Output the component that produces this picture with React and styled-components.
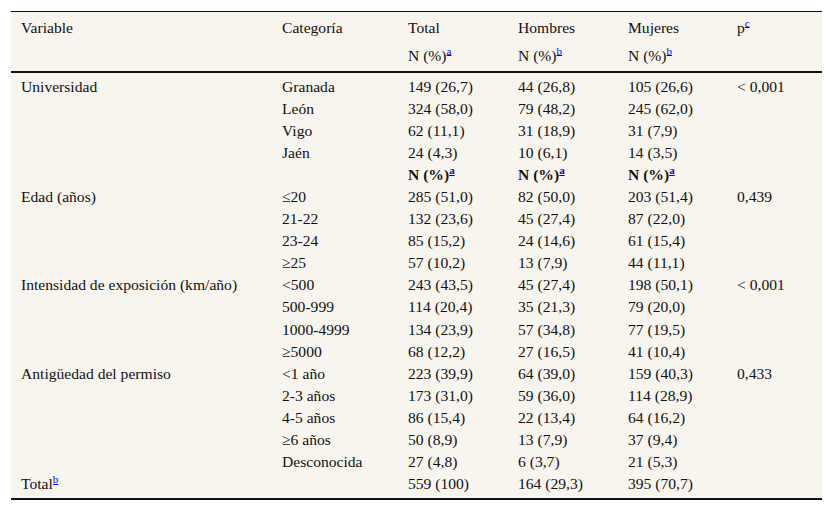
import React from "react";
import styled, { createGlobalStyle } from "styled-components";

const GlobalStyle = createGlobalStyle`
  body {
    margin: 0;
    background: #ffffff;
    font-family: "Liberation Serif", "Times New Roman", serif;
  }
`;

const Page = styled.div`
  padding: 11px 0 0 11px;
`;

const Table = styled.table`
  width: 811px;
  table-layout: fixed;
  border-collapse: collapse;
  background: #f8f5ef;
  border-top: 1px solid #111;
  border-bottom: 2px solid #111;
  font-family: "Liberation Serif", "Times New Roman", serif;
  font-size: 15.6px;
  color: #111;
`;

const Th = styled.th`
  text-align: left;
  font-weight: normal;
  vertical-align: top;
  padding: ${(p) => (p.$second ? "5.5px 10px 7.5px" : "6.5px 10px 5.5px")};
  height: 17px;
  line-height: 17px;
  width: ${(p) => p.$w || "auto"};
  white-space: nowrap;
`;

const HeadRow = styled.tr`
  &:last-child th {
    border-bottom: 2px solid #111;
  }
`;

const Td = styled.td`
  text-align: left;
  vertical-align: top;
  padding: 2.5px 10px 2.6px;
  line-height: 17px;
  font-weight: ${(p) => (p.$bold ? "bold" : "normal")};
  white-space: nowrap;
  tbody tr:first-child & {
    padding-top: 4.5px;
  }
  tbody tr:last-child & {
    padding-bottom: 5.5px;
  }
`;

const Sup = styled.a`
  color: #0000ee;
  text-decoration: underline;
  font-size: 11px;
  vertical-align: super;
  line-height: 0;
`;

const rows = [
  ["Universidad", "Granada", "149 (26,7)", "44 (26,8)", "105 (26,6)", "< 0,001"],
  ["", "León", "324 (58,0)", "79 (48,2)", "245 (62,0)", ""],
  ["", "Vigo", "62 (11,1)", "31 (18,9)", "31 (7,9)", ""],
  ["", "Jaén", "24 (4,3)", "10 (6,1)", "14 (3,5)", ""],
  "bold",
  ["Edad (años)", "≤20", "285 (51,0)", "82 (50,0)", "203 (51,4)", "0,439"],
  ["", "21-22", "132 (23,6)", "45 (27,4)", "87 (22,0)", ""],
  ["", "23-24", "85 (15,2)", "24 (14,6)", "61 (15,4)", ""],
  ["", "≥25", "57 (10,2)", "13 (7,9)", "44 (11,1)", ""],
  ["Intensidad de exposición (km/año)", "<500", "243 (43,5)", "45 (27,4)", "198 (50,1)", "< 0,001"],
  ["", "500-999", "114 (20,4)", "35 (21,3)", "79 (20,0)", ""],
  ["", "1000-4999", "134 (23,9)", "57 (34,8)", "77 (19,5)", ""],
  ["", "≥5000", "68 (12,2)", "27 (16,5)", "41 (10,4)", ""],
  ["Antigüedad del permiso", "<1 año", "223 (39,9)", "64 (39,0)", "159 (40,3)", "0,433"],
  ["", "2-3 años", "173 (31,0)", "59 (36,0)", "114 (28,9)", ""],
  ["", "4-5 años", "86 (15,4)", "22 (13,4)", "64 (16,2)", ""],
  ["", "≥6 años", "50 (8,9)", "13 (7,9)", "37 (9,4)", ""],
  ["", "Desconocida", "27 (4,8)", "6 (3,7)", "21 (5,3)", ""],
];

const NPct = ({ note }) => (
  <>
    N (%)<Sup href="#">{note}</Sup>
  </>
);

export default function App() {
  return (
    <Page>
      <GlobalStyle />
      <Table>
        <thead>
          <HeadRow>
            <Th $w="241px">Variable</Th>
            <Th $w="106px">Categoría</Th>
            <Th $w="90px">Total</Th>
            <Th $w="90px">Hombres</Th>
            <Th $w="89px">Mujeres</Th>
            <Th>
              p<Sup href="#">c</Sup>
            </Th>
          </HeadRow>
          <HeadRow>
            <Th $second />
            <Th $second />
            <Th $second>
              <NPct note="a" />
            </Th>
            <Th $second>
              <NPct note="b" />
            </Th>
            <Th $second>
              <NPct note="b" />
            </Th>
            <Th $second />
          </HeadRow>
        </thead>
        <tbody>
          {rows.map((r, i) =>
            r === "bold" ? (
              <tr key={i}>
                <Td />
                <Td />
                <Td $bold>
                  <NPct note="a" />
                </Td>
                <Td $bold>
                  <NPct note="a" />
                </Td>
                <Td $bold>
                  <NPct note="a" />
                </Td>
                <Td />
              </tr>
            ) : (
              <tr key={i}>
                {r.map((c, j) => (
                  <Td key={j}>{c}</Td>
                ))}
              </tr>
            )
          )}
          <tr>
            <Td>
              Total<Sup href="#">b</Sup>
            </Td>
            <Td />
            <Td>559 (100)</Td>
            <Td>164 (29,3)</Td>
            <Td>395 (70,7)</Td>
            <Td />
          </tr>
        </tbody>
      </Table>
    </Page>
  );
}
